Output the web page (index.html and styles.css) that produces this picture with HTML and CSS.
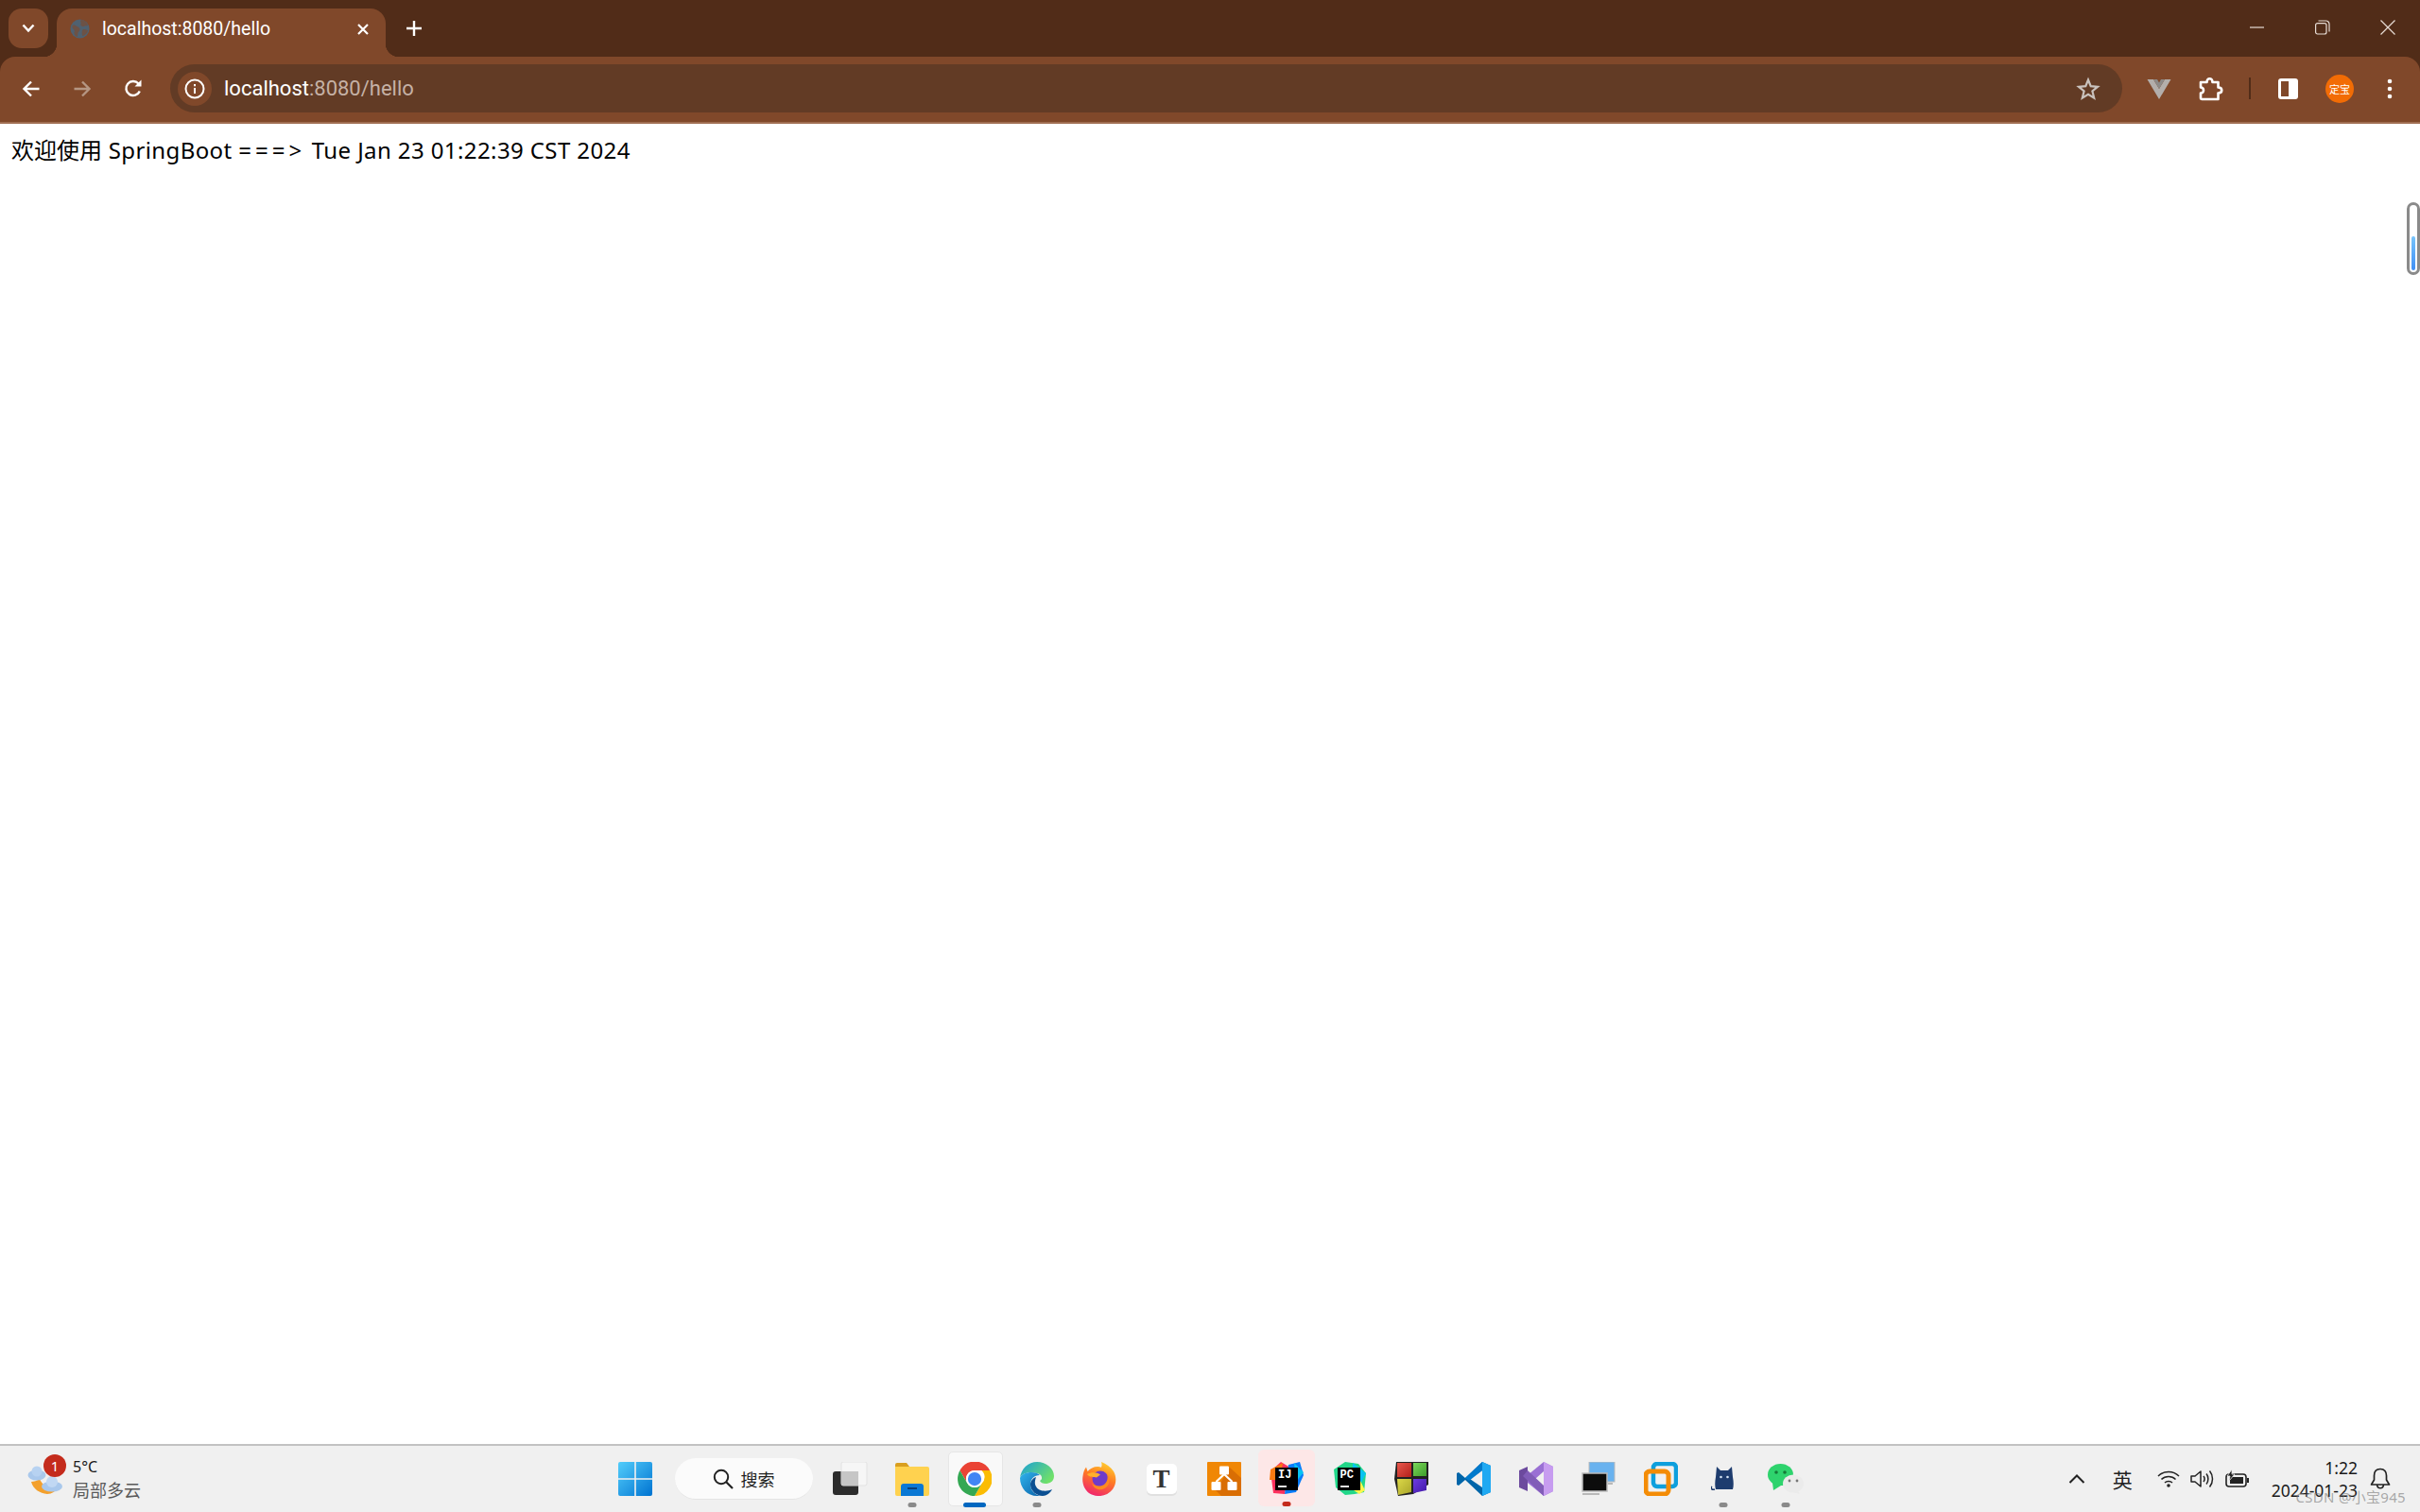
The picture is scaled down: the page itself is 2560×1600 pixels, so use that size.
FILE: index.html
```html
<!DOCTYPE html>
<html lang="zh">
<head>
<meta charset="utf-8">
<title>localhost:8080/hello</title>
<link rel="stylesheet" href="styles.css">
</head>
<body>
<div class="screen">
  <header class="browser">
    <div class="tabstrip">
      <button class="tabsearch"><svg width="14" height="10" viewBox="0 0 14 10"><path d="M1.500 1.500 7 7.500 12.500 1.500" fill="none" stroke="#fff" stroke-width="2.500"/></svg></button>
      <div class="tab">
        <svg class="favicon" width="21" height="21" viewBox="0 0 22 22"><circle cx="11" cy="11" r="10.500" fill="#4f6170"/><path d="M3 7c3-1 4 1 6 2s3 3 1 5-1 5-2 6c-3-1-4-4-3-6S1 10 3 7ZM12 1c4 0 6 2 8 6-2 1-3 0-4 1s-3 0-4-1 1-2 0-3 0-2 0-3ZM14 12c2-1 4 0 6 1-1 3-3 5-6 6-1-2-1-5 0-7Z" fill="#80482a" opacity=".6"/></svg>
        <span class="tabtitle">localhost:8080/hello</span>
        <svg class="tabclose" width="14" height="14" viewBox="0 0 14 14"><path d="M2 2 12 12M12 2 2 12" stroke="#fff" stroke-width="2.200"/></svg>
      </div>
      <svg class="newtab" width="18" height="18" viewBox="0 0 18 18"><path d="M9 1v16M1 9h16" stroke="#fff" stroke-width="2.400"/></svg>
      <div class="winctrls">
        <svg width="16" height="16" viewBox="0 0 16 16"><path d="M0 8h15" stroke="#e8ddd6" stroke-width="1.200"/></svg>
        <svg width="16" height="16" viewBox="0 0 16 16"><rect x=".6" y="3.600" width="11.400" height="11.400" rx="2" fill="none" stroke="#e8ddd6" stroke-width="1.200"/><path d="M3.500 1h8a3.500 3.500 0 0 1 3.500 3.500v8" fill="none" stroke="#e8ddd6" stroke-width="1.200"/></svg>
        <svg width="16" height="16" viewBox="0 0 16 16"><path d="M.5.5l15 15M15.500.5l-15 15" stroke="#e8ddd6" stroke-width="1.200"/></svg>
      </div>
    </div>
    <div class="toolbar">
      <div class="navbtns">
        <svg width="20" height="20" viewBox="0 0 20 20"><path d="M18.500 10H3M10 2.500 2.500 10l7.500 7.500" fill="none" stroke="#fff" stroke-width="2.400"/></svg>
        <svg width="20" height="20" viewBox="0 0 20 20"><path d="M1.500 10H17M10 2.500 17.500 10 10 17.500" fill="none" stroke="#b59683" stroke-width="2.400"/></svg>
        <svg width="20" height="20" viewBox="0 0 20 20"><path d="M16.800 12.500A7.500 7.500 0 1 1 15.500 4.500" fill="none" stroke="#fff" stroke-width="2.400"/><path d="M11.500 7.500h7v-7z" fill="#fff"/></svg>
      </div>
      <div class="omnibox">
        <span class="siteinfo"><svg width="22" height="22" viewBox="0 0 22 22"><circle cx="11" cy="11" r="9.500" fill="none" stroke="#fff" stroke-width="2"/><path d="M11 10v6M11 6v2.200" stroke="#fff" stroke-width="2"/></svg></span>
        <span class="url"><span class="host">localhost</span>:8080/hello</span>
        <svg class="star" width="26" height="26" viewBox="0 0 26 26"><path d="M13 3.500 15.700 10.200 23 10.800 17.400 15.500 19.200 22.600 13 18.800 6.800 22.600 8.600 15.500 3 10.800 10.300 10.200Z" fill="none" stroke="#c9c2bd" stroke-width="2.200"/></svg>
      </div>
      <div class="extensions">
        <svg class="ext-v" width="26" height="22" viewBox="0 0 26 22"><path d="M.500 1h6.500L13 11 19 1h6.500L13 22Z" fill="#b3aeab"/><path d="M7 1h4l2 3.500L15 1h4L13 11Z" fill="#8d8a88"/></svg>
        <svg class="ext-p" width="26" height="26" viewBox="0 0 26 26"><path d="M2 6h6.500c0-5 6-5 6 0H20.500v5.500c5 0 5 6 0 6v6.500H3.500c-1 0-1.500-.5-1.500-1.500v-5c4 0 4-6 0-6Z" fill="none" stroke="#fff" stroke-width="2.600" stroke-linejoin="round"/></svg>
        <span class="divider"></span>
        <span class="sidepanel"><span class="sidepanel-l"></span></span>
        <span class="avatar">定宝</span>
        <svg class="kebab" width="8" height="22" viewBox="0 0 8 22"><circle cx="4" cy="3" r="2.300" fill="#fff"/><circle cx="4" cy="11" r="2.300" fill="#fff"/><circle cx="4" cy="19" r="2.300" fill="#fff"/></svg>
      </div>
    </div>
  </header>

  <main class="page"><span class="cjk">欢迎使用</span> SpringBoot <span class="arrow">===&gt;</span> Tue Jan 23 01:22:39 CST 2024</main>

  <footer class="taskbar">
    <div class="tb-left">
      <span class="weather-ic">
        <svg width="40" height="36" viewBox="0 0 40 36"><path d="M5 21c2 8 9 12 17 13 5 0 9-3 11-7-7 2-15 0-19-9-3 2-6 3-9 3Z" fill="#f3a02d"/><ellipse cx="11" cy="14" rx="9.500" ry="5.500" fill="#a9c8ec"/><circle cx="11" cy="10" r="5.500" fill="#b7d2f1"/><ellipse cx="27" cy="26" rx="11" ry="5.500" fill="#a9c8ec"/><circle cx="27" cy="21" r="6" fill="#c1d8f3"/></svg>
        <span class="badge">1</span>
      </span>
      <div class="weather-txt"><span class="temp">5°C</span><span class="cond">局部多云</span></div>
    </div>
    <div class="tb-center">
      <span class="cell cell-start">
        <svg width="36" height="36" viewBox="0 0 36 36"><defs><linearGradient id="w" x1="0" y1="0" x2="1" y2="1"><stop offset="0" stop-color="#52cdfb"/><stop offset="1" stop-color="#0073d1"/></linearGradient></defs><path d="M2 0h15.200v17.200H0V2a2 2 0 0 1 2-2ZM18.800 0H34a2 2 0 0 1 2 2v15.200H18.800ZM0 18.800h17.200V36H2a2 2 0 0 1-2-2ZM18.800 18.800H36V34a2 2 0 0 1-2 2H18.800Z" fill="url(#w)"/></svg>
      </span>
      <span class="cell-search">
        <span class="searchbox">
          <svg width="22" height="22" viewBox="0 0 22 22"><circle cx="9" cy="9" r="7.200" fill="none" stroke="#222" stroke-width="2"/><path d="M14 14l7 7" stroke="#222" stroke-width="2.200"/></svg>
          <span class="searchtxt">搜索</span>
        </span>
      </span>
      <span class="cell cell-tv">
        <svg width="38" height="36" viewBox="0 0 38 36"><rect x="0" y="10" width="27" height="25" rx="3" fill="#2c2c2c"/><rect x="9" y="0" width="27" height="25" rx="2" fill="#f6f6f6" stroke="#e2e2e2"/><rect x="9" y="10" width="18" height="15" fill="#c6c6c6"/></svg>
      </span>
      <span class="cell dot-grey">
        <svg width="36" height="36" viewBox="0 0 36 36"><path d="M0 3a2 2 0 0 1 2-2h10l3 4H0Z" fill="#d99f20"/><path d="M0 5h34a2 2 0 0 1 2 2v27a2 2 0 0 1-2 2H2a2 2 0 0 1-2-2Z" fill="#ffd24f"/><path d="M6 26a3 3 0 0 1 3-3h18a3 3 0 0 1 3 3v10H6Z" fill="#0a78d4"/><path d="M13 27h10v2H13Z" fill="#083e78"/></svg>
      </span>
      <span class="cell dot-blue">
        <svg width="36" height="36" viewBox="0 0 48 48"><circle cx="24" cy="24" r="24" fill="#fff"/><path d="M24 12h21.500A24 24 0 0 0 3.200 12.100L13 29a12 12 0 0 1 11-17Z" fill="#ea4335"/><path d="M24 48a24 24 0 0 0 21.500-36H33.700A12 12 0 0 1 34.400 30L24 48Z" fill="#fbbc04"/><path d="M3.200 12.100A24 24 0 0 0 24 48l10.400-18A12 12 0 0 1 13.600 30Z" fill="#34a853"/><circle cx="24" cy="24" r="12" fill="#fff"/><circle cx="24" cy="24" r="9.500" fill="#4285f4"/></svg>
      </span>
      <span class="cell dot-grey">
        <svg width="36" height="36" viewBox="0 0 36 36"><defs><linearGradient id="e1" x1="0" y1="0" x2="1" y2="1"><stop offset="0" stop-color="#2fb4ec"/><stop offset="1" stop-color="#0a5fa8"/></linearGradient><linearGradient id="e2" x1="0" y1="0" x2="1" y2=".6"><stop offset="0" stop-color="#1a9fd8"/><stop offset="1" stop-color="#6fe06a"/></linearGradient></defs><path d="M0 17C1 7 9 0 18 0c10 0 18 7 18 15 0 6-5 8-9 8-3 0-5-1-6-3 2-1 3-3 1-6-4-4-20-4-22 3Z" fill="url(#e2)"/><path d="M0 17c2-7 17-8 21-3-6 0-10 4-10 10 0 6 5 12 13 12-3 0-4 0-6 0C8 36 0 28 0 17Z" fill="url(#e1)"/><path d="M17 16c-3 1-6 4-6 8 0 7 7 12 13 12 4 0 8-3 10-7-6 3-15 2-17-3-2-3-1-7 0-10Z" fill="#0b4f92"/></svg>
      </span>
      <span class="cell">
        <svg width="36" height="36" viewBox="0 0 36 36"><defs><linearGradient id="f1" x1=".7" y1="0" x2=".3" y2="1"><stop offset="0" stop-color="#ffd02f"/><stop offset=".45" stop-color="#ff7a24"/><stop offset="1" stop-color="#f0226f"/></linearGradient></defs><path d="M.5 15C1 11 2 8 4 5.500L5.500 10C8 7 12 5 16 5c1.500 0 3 .2 4 .8C21 3.500 20.500 1.500 20 0c5 2 10 5.500 13 10 3 5 3.500 13-1 19-6 8-17 9-25 4C1 28-.5 21 .5 15Z" fill="url(#f1)"/><circle cx="19" cy="18" r="8.500" fill="#6f3bc9"/><path d="M10 22c2 4 10 5 14 1 3-3 3-7 2-10 3 4 4 10-1 14-5 4-13 3-15-5Z" fill="#ff8a1f"/><path d="M5 13c4-2.500 10-2.500 14 .5l-4 3c-3-.5-7.500 0-10-3.500Z" fill="#ffb02c"/></svg>
      </span>
      <span class="cell">
        <span class="typora">T</span>
      </span>
      <span class="cell">
        <svg width="36" height="36" viewBox="0 0 36 36"><rect width="36" height="36" rx="1" fill="#f08705"/><path d="M36 17 24 6 9 30l6 6h21Z" fill="#d96e04"/><rect x="13" y="4.500" width="10" height="9" rx="1" fill="#fff"/><rect x="4.500" y="21" width="10" height="9" rx="1" fill="#fff"/><rect x="21.500" y="21" width="10" height="9" rx="1" fill="#fff"/><path d="M18 13 9.500 21M18 13l8.500 8" stroke="#fff" stroke-width="2.200"/></svg>
      </span>
      <span class="cell-idea">
        <svg width="36" height="36" viewBox="0 0 36 36"><path d="M1 10 12 0l10 6-6 28-12-1Z" fill="#fe315d"/><path d="M1 8 14 1l-3 18H0Z" fill="#f97a12"/><path d="M20 3 32 0l4 14-8 18-12 2Z" fill="#087cfa"/><path d="M26 1l10 10-8 10Z" fill="#07c3f2"/><rect x="6" y="6" width="24" height="24" fill="#000"/><text class="jb-t" x="9" y="17">IJ</text><path d="M9 26h9" stroke="#fff" stroke-width="1.800"/></svg>
      </span>
      <span class="cell">
        <svg width="36" height="36" viewBox="0 0 36 36"><path d="M2 8 14 0l14 2 8 10-2 20-10 2-10 1-10-8Z" fill="#21d789"/><path d="M22 1l14 11-6 12-8-6Z" fill="#07c3f2"/><path d="M20 28l10-8 5 10-6 4Z" fill="#fcf84a"/><rect x="6" y="6" width="24" height="24" fill="#000"/><text class="jb-t" x="8.500" y="17">PC</text><path d="M9 26h9" stroke="#fff" stroke-width="1.800"/></svg>
      </span>
      <span class="cell">
        <svg width="36" height="36" viewBox="0 0 36 36"><defs><linearGradient id="c1" x1="0" y1="0" x2="1" y2="1"><stop offset="0" stop-color="#e8584d"/><stop offset="1" stop-color="#b3201a"/></linearGradient><linearGradient id="c2" x1="0" y1="0" x2="1" y2="1"><stop offset="0" stop-color="#7bd65a"/><stop offset="1" stop-color="#3e9e2a"/></linearGradient><linearGradient id="c3" x1="0" y1="0" x2="1" y2="1"><stop offset="0" stop-color="#dcd848"/><stop offset="1" stop-color="#a9a52a"/></linearGradient><linearGradient id="c4" x1="0" y1="0" x2="1" y2="1"><stop offset="0" stop-color="#6d3ce0"/><stop offset="1" stop-color="#4219a8"/></linearGradient></defs><path d="M2 0h34v24l-16 10-16 2L0 18Z" fill="#222"/><path d="M3 1 18 1v15H3Z" fill="url(#c1)"/><path d="M20 1h14v14H20Z" fill="url(#c2)"/><path d="M3 18h15v14L4 35Z" fill="url(#c3)"/><path d="M20 18h14v12l-14 3Z" fill="url(#c4)"/></svg>
      </span>
      <span class="cell">
        <svg width="36" height="36" viewBox="0 0 36 36"><path d="M27 0 9 17 2 11 0 12v12l2 1 7-6 18 17 9-4V4Z" fill="#0065a9"/><path d="M27 0v36l9-4V4Z" fill="#1fa9f2"/><path d="M27 9 14 18l13 9Z" fill="#f0f0f0"/><path d="M27 0 9 17l4 3L27 9Z" fill="#007acc"/></svg>
      </span>
      <span class="cell">
        <svg width="36" height="36" viewBox="0 0 36 36"><path d="M0 9 9 5v26L0 27Z" fill="#6c4a9e"/><path d="M26 0 36 5v26l-10 5-17-14 0-8Z" fill="#9a70d4"/><path d="M26 0v36l10-5V5Z" fill="#c79cf0"/><path d="M26 10 17 18l9 8Z" fill="#f0f0f0"/><path d="M9 9 26 25v11L4 15Z" fill="#815db8"/></svg>
      </span>
      <span class="cell">
        <svg width="36" height="36" viewBox="0 0 36 36"><rect x="8" y="0" width="27" height="21" fill="#69b2ef" stroke="#bbb"/><rect x="1" y="12" width="26" height="19" fill="#0c0c0c" stroke="#bbb" stroke-width="1.500"/><path d="M10 33h9v2H1v-2Z" fill="#b8b8b8"/><path d="M28 22h5v2h-5Z" fill="#b8b8b8"/></svg>
      </span>
      <span class="cell">
        <svg width="36" height="36" viewBox="0 0 36 36"><rect x="10" y="2" width="24" height="24" rx="4" fill="none" stroke="#0d9fdd" stroke-width="4.500"/><rect x="2" y="10" width="24" height="24" rx="4" fill="none" stroke="#f48c06" stroke-width="5"/></svg>
      </span>
      <span class="cell dot-grey">
        <svg width="26" height="26" viewBox="0 0 26 26"><path d="M6 0l4 4h8l4-4 1 11c1 5 1 10 0 13H5c-1-3-1-8 0-13Z" fill="#1e3c6e"/><circle cx="10.500" cy="11" r="1.300" fill="#d7e5f5"/><circle cx="17.500" cy="11" r="1.300" fill="#d7e5f5"/><path d="M4 24c-3 1-5-1-3-3" fill="none" stroke="#1e3c6e" stroke-width="1.500"/></svg>
      </span>
      <span class="cell dot-grey">
        <svg width="38" height="32" viewBox="0 0 38 32"><ellipse cx="13.500" cy="11.500" rx="13.500" ry="11.500" fill="#2ed36d"/><path d="M5 20 6 28l8-5Z" fill="#2ed36d"/><circle cx="9" cy="9" r="1.800" fill="#147a38"/><circle cx="18" cy="9" r="1.800" fill="#147a38"/><ellipse cx="27" cy="21" rx="11" ry="9.500" fill="#ebebeb"/><path d="M31 27l3 5-8-2Z" fill="#ebebeb"/><circle cx="23" cy="18" r="1.400" fill="#777"/><circle cx="31" cy="18" r="1.400" fill="#777"/></svg>
      </span>
    </div>
    <div class="tb-right">
      <svg class="caret" width="18" height="12" viewBox="0 0 18 12"><path d="M1.500 10 9 2.500 16.500 10" fill="none" stroke="#222" stroke-width="2"/></svg>
      <span class="ime">英</span>
      <svg class="wifi" width="24" height="20" viewBox="0 0 24 20"><path d="M1 7c6-6 16-6 22 0M4.500 10.500c4-4 11-4 15 0M8 14c2-2 6-2 8 0" fill="none" stroke="#222" stroke-width="1.500"/><circle cx="12" cy="17" r="1.800" fill="#222"/></svg>
      <svg class="vol" width="26" height="22" viewBox="0 0 26 22"><path d="M1 8h4l6-5v16l-6-5H1Z" fill="none" stroke="#222" stroke-width="1.500" stroke-linejoin="round"/><path d="M14 8c1.500 2 1.500 4 0 6M17 5.500c2.500 3 2.500 8 0 11M20.500 2.500c4 5 4 12 0 17" fill="none" stroke="#222" stroke-width="1.500"/></svg>
      <svg class="batt" width="26" height="20" viewBox="0 0 26 20"><rect x="1" y="5" width="21" height="13" rx="3" fill="none" stroke="#222" stroke-width="1.600"/><rect x="5" y="8" width="14" height="7" fill="#222"/><path d="M23 9h2v5h-2Z" fill="#222"/><path d="M7 0 2 7h3l-1 5 6-7H7Z" fill="#222" stroke="#f0f0f0" stroke-width=".8"/></svg>
      <div class="clock"><span>1:22</span><span>2024-01-23</span></div>
      <svg class="bell" width="22" height="24" viewBox="0 0 22 24"><path d="M11 1.500c-4.500 0-6.500 3-6.500 7v4.500L1.500 18h19l-3-5V8.500c0-4-2-7-6.500-7ZM7.500 18c.5 5 6.500 5 7 0" fill="none" stroke="#222" stroke-width="1.700" stroke-linejoin="round"/></svg>
    </div>
    <span class="watermark">CSDN @小宝945</span>
  </footer>

  <div class="floatbar"><span class="floatfill"></span></div>
</div>
</body>
</html>
```
FILE: styles.css
```css
* { box-sizing: border-box; }
html, body { margin: 0; height: 100%; }
body { font-family: "Noto Sans", "Noto Sans CJK SC", sans-serif; overflow: hidden; background: #fff; }
svg { display: block; flex: none; }

.screen { position: relative; width: 2560px; height: 1600px; display: flex; flex-direction: column; }

.browser { background: #512c18; flex: none; }
.tabstrip { height: 60px; display: flex; align-items: flex-start; padding: 9px 0 0 9px; position: relative; }
.tabsearch { flex: none; width: 42px; height: 42px; border: 0; padding: 0; border-radius: 14px; background: #80482a; display: flex; align-items: center; justify-content: center; }
.tab { flex: none; margin-left: 9px; width: 348px; height: 51px; background: #80482a; border-radius: 16px 16px 0 0; display: flex; align-items: center; padding: 0 17px 8px 14px; position: relative; color: #fff; }
.tab::before, .tab::after { content: ""; position: absolute; bottom: 0; width: 14px; height: 14px; }
.tab::before { left: -14px; background: radial-gradient(circle at 0 0, transparent 14px, #80482a 14.500px); }
.tab::after { right: -14px; background: radial-gradient(circle at 100% 0, transparent 14px, #80482a 14.500px); }
.tabtitle { margin-left: 13px; font-size: 19.500px; flex: 1; white-space: nowrap; font-family: "Roboto", "Noto Sans", sans-serif; }
.newtab { margin: 12px 0 0 21px; }
.winctrls { margin-left: auto; display: flex; gap: 53px; padding: 12px 26px 0 0; }

.toolbar { height: 71px; background: #80482a; border-bottom: 2px solid #a06e52; border-radius: 16px 16px 0 0; display: flex; align-items: center; padding-bottom: 2px; }
.navbtns { flex: none; display: flex; width: 180px; gap: 34px; padding-left: 23px; }
.omnibox { flex: none; width: 2065px; height: 51px; background: #623b25; border-radius: 26px; display: flex; align-items: center; padding: 0 23px 0 8px; }
.siteinfo { width: 36px; height: 36px; border-radius: 50%; background: #80482a; display: flex; align-items: center; justify-content: center; flex: none; }
.url { margin-left: 13px; color: #c5b1a5; font-size: 22px; font-family: "Roboto", "Noto Sans", sans-serif; flex: 1; white-space: nowrap; }
.host { color: #fff; }
.extensions { display: flex; align-items: center; flex: 1; }
.ext-v { margin-left: 26px; }
.ext-p { margin-left: 29px; }
.divider { width: 2px; height: 23px; background: #512c18; margin-left: 27px; }
.sidepanel { margin-left: 29px; width: 21px; height: 22px; border-radius: 3px; background: #fff; padding: 3px 10px 3px 3px; display: block; }
.sidepanel-l { display: block; width: 100%; height: 100%; background: #80482a; }
.avatar { margin-left: 29px; width: 30px; height: 30px; border-radius: 50%; background: #f26c05; color: #fff; font-size: 11px; display: flex; align-items: center; justify-content: center; white-space: nowrap; }
.kebab { margin-left: 34px; }

.page { flex: 1; padding: 11px 12px 0; font-size: 24px; line-height: 34px; color: #000; white-space: pre; letter-spacing: .4px; }
.cjk { letter-spacing: 0; }
.arrow { letter-spacing: 4px; }

.taskbar { height: 72px; flex: none; background: #f0f0f0; border-top: 2px solid #c2c2c2; display: grid; grid-template-columns: 1fr auto 1fr; align-items: center; position: relative; }
.tb-left { display: flex; align-items: center; padding-left: 28px; }
.weather-ic { position: relative; display: block; width: 40px; height: 36px; }
.badge { position: absolute; left: 18px; top: -8px; width: 24px; height: 24px; border-radius: 50%; background: #c42b1c; color: #fff; font-size: 15px; line-height: 24px; text-align: center; }
.weather-txt { display: flex; flex-direction: column; margin-left: 9px; }
.temp { font-size: 16px; line-height: 24px; color: #1a1a1a; }
.cond { font-size: 18px; line-height: 26px; color: #5a5a5a; }

.tb-center { display: flex; align-items: center; height: 70px; }
.cell { width: 66px; height: 70px; display: flex; align-items: center; justify-content: center; position: relative; }
.cell-search { width: 161px; display: flex; justify-content: flex-start; padding-left: 9px; }
.searchbox { width: 146px; height: 44px; border-radius: 22px; background: #fbfbfb; border-bottom: 1px solid #e4e4e4; display: flex; align-items: center; justify-content: center; gap: 8px; }
.searchtxt { font-size: 18px; color: #222; }
.cell-tv svg { margin-left: 2px; }
.cell::after { position: absolute; bottom: 5px; left: 50%; transform: translateX(-50%); }
.dot-grey::after { content: ""; width: 9px; height: 5px; border-radius: 3px; background: #8a8a8a; }
.dot-blue::before { content: ""; position: absolute; left: 5px; top: 6px; width: 56px; height: 56px; background: #f9f9f9; border: 1px solid #e6e6e6; border-radius: 5px; }
.dot-blue svg { position: relative; }
.dot-blue::after { content: ""; width: 24px; height: 5px; border-radius: 3px; background: #0067c0; }
.cell-idea { width: 66px; height: 70px; display: flex; align-items: center; justify-content: center; position: relative; }
.cell-idea::before { content: ""; position: absolute; left: 3px; top: 4px; width: 60px; height: 60px; background: #fde7e7; border-radius: 6px; }
.cell-idea::after { content: ""; position: absolute; bottom: 6px; left: 50%; transform: translateX(-50%); width: 9px; height: 5px; border-radius: 3px; background: #c42b1c; }
.cell-idea svg { position: relative; }
.jb-t { font: 700 12px "Liberation Mono", monospace; fill: #fff; }
.typora { width: 32px; height: 32px; border-radius: 5px; background: #fff; box-shadow: 0 2px 0 #e0e0e0; font: 700 27px/32px "Liberation Serif", serif; text-align: center; color: #333; }

.tb-right { display: flex; align-items: center; justify-content: flex-end; padding-right: 31px; }
.caret { margin-right: 29px; }
.ime { font-size: 21px; color: #222; margin-right: 26px; }
.wifi { margin-right: 11px; }
.vol { margin-right: 11px; }
.batt { margin-right: 23px; }
.clock { display: flex; flex-direction: column; align-items: flex-end; font-size: 17.500px; line-height: 24px; color: #1a1a1a; margin-right: 13px; white-space: nowrap; }
.watermark { position: absolute; right: 15px; bottom: 6px; font-size: 15px; letter-spacing: .3px; color: rgba(120,120,120,.62); }

.floatbar { position: absolute; right: 0; top: 214px; width: 14px; height: 77px; border: 3px solid #8a8a8a; border-radius: 7px; background: #fff; padding: 33px 2px 2px; }
.floatfill { display: block; width: 100%; height: 100%; border-radius: 2px; background: linear-gradient(#78c4fb, #3f8ef5); }
```
